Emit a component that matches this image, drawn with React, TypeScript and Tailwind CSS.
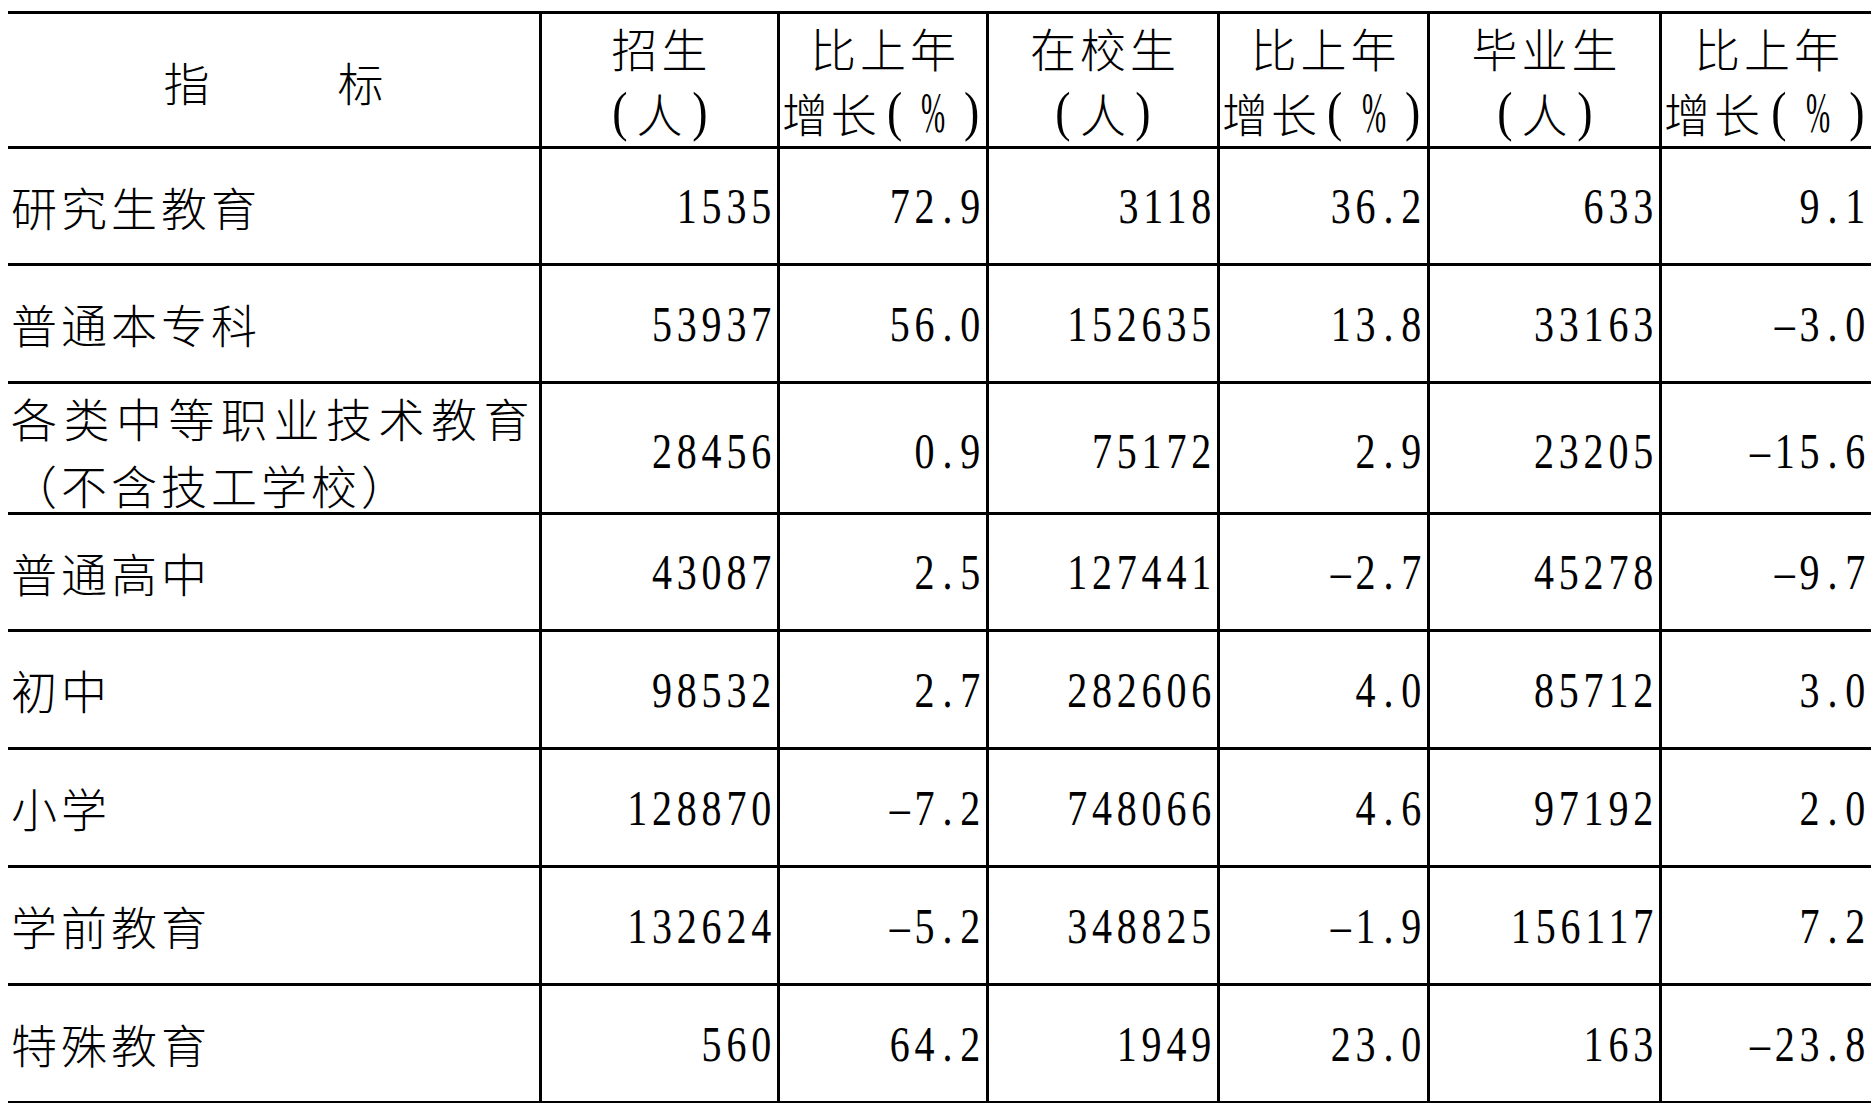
const cjk = "font-['Noto_Sans_CJK_SC',sans-serif]"
const serif = "font-['Liberation_Serif','Noto_Sans_CJK_SC',serif]"
const cols = "grid grid-cols-[531px_238px_209px_231px_210px_232px_1fr]"

type Row = { name: [string, string][]; values: string[]; height: string }

const rows: Row[] = [
  { name: [["研究生教育", "tracking-[4px]"]], values: ["1535", "72.9", "3118", "36.2", "633", "9.1"], height: "h-[117px]" },
  { name: [["普通本专科", "tracking-[4px]"]], values: ["53937", "56.0", "152635", "13.8", "33163", "–3.0"], height: "h-[118px]" },
  {
    name: [
      ["各类中等职业技术教育", "tracking-[6.5px]"],
      ["（不含技工学校）", "tracking-[4px]"],
    ],
    values: ["28456", "0.9", "75172", "2.9", "23205", "–15.6"],
    height: "h-[131px]",
  },
  { name: [["普通高中", "tracking-[4px]"]], values: ["43087", "2.5", "127441", "–2.7", "45278", "–9.7"], height: "h-[117px]" },
  { name: [["初中", "tracking-[4px]"]], values: ["98532", "2.7", "282606", "4.0", "85712", "3.0"], height: "h-[118px]" },
  { name: [["小学", "tracking-[4px]"]], values: ["128870", "–7.2", "748066", "4.6", "97192", "2.0"], height: "h-[118px]" },
  { name: [["学前教育", "tracking-[4px]"]], values: ["132624", "–5.2", "348825", "–1.9", "156117", "7.2"], height: "h-[118px]" },
  { name: [["特殊教育", "tracking-[4px]"]], values: ["560", "64.2", "1949", "23.0", "163", "–23.8"], height: "h-[118px]" },
]

const headers: [string, "people" | "pct"][] = [
  ["招生", "people"],
  ["比上年", "pct"],
  ["在校生", "people"],
  ["比上年", "pct"],
  ["毕业生", "people"],
  ["比上年", "pct"],
]

function Paren({ ch }: { ch: string }) {
  return (
    <span className={`${serif} inline-block w-[30px] scale-x-[0.85] text-center text-[54px] font-normal leading-[65px]`}>
      {ch}
    </span>
  )
}

function Unit({ kind }: { kind: "people" | "pct" }) {
  if (kind === "people") {
    return (
      <span className="flex items-center justify-center">
        <Paren ch="(" />
        <span className="inline-block w-[50px] text-center">人</span>
        <Paren ch=")" />
      </span>
    )
  }
  return (
    <span className="flex w-full items-center pl-[2px]">
      <span className="inline-block w-[50px]">增</span>
      <span className="inline-block w-[50px]">长</span>
      <Paren ch="(" />
      <span className={`${serif} inline-block w-[48px] scale-x-[0.5] text-center text-[58px] font-normal leading-[65px]`}>%</span>
      <Paren ch=")" />
    </span>
  )
}

function Num({ value }: { value: string }) {
  const [whole, frac] = value.split(".")
  return (
    <span
      className={`${serif} inline-block origin-right scale-x-[0.8] text-[50px] font-normal leading-none tracking-[6px] text-black whitespace-nowrap`}
    >
      {whole}
      {frac !== undefined && (
        <>
          <span className="inline-block w-[26px] pl-[4px] text-left">.</span>
          {frac}
        </>
      )}
    </span>
  )
}

export default function App() {
  return (
    <div className="w-[1871px] h-[1103px] bg-white pt-[11px] pl-[8px] overflow-hidden">
      <div className={`w-[1863px] border-b-[3px] border-black ${cjk} font-light text-black`}>
        {/* header */}
        <div className={`${cols} h-[135px] border-t-[3px] border-black`}>
          <div className="flex items-center justify-center gap-[128px] pt-[2px] text-[46px]">
            <span>指</span>
            <span>标</span>
          </div>
          {headers.map(([top, kind], i) => (
            <div
              key={i}
              className="flex flex-col items-center justify-center border-l-[3px] border-black text-[46px] leading-[65px]"
            >
              <span className="tracking-[4px] pl-[4px] whitespace-nowrap">{top}</span>
              <Unit kind={kind} />
            </div>
          ))}
        </div>

        {rows.map((row, r) => (
          <div key={r} className={`${cols} ${row.height} border-t-[3px] border-black`}>
            <div className="flex flex-col justify-center pl-[3px] text-[46px] leading-[67px]">
              {row.name.map(([line, track]) => (
                <span key={line} className={`whitespace-nowrap ${track}`}>
                  {line}
                </span>
              ))}
            </div>
            {row.values.map((v, c) => (
              <div key={c} className="flex items-center justify-end border-l-[3px] border-black pr-[1px]">
                <Num value={v} />
              </div>
            ))}
          </div>
        ))}
      </div>
    </div>
  )
}
